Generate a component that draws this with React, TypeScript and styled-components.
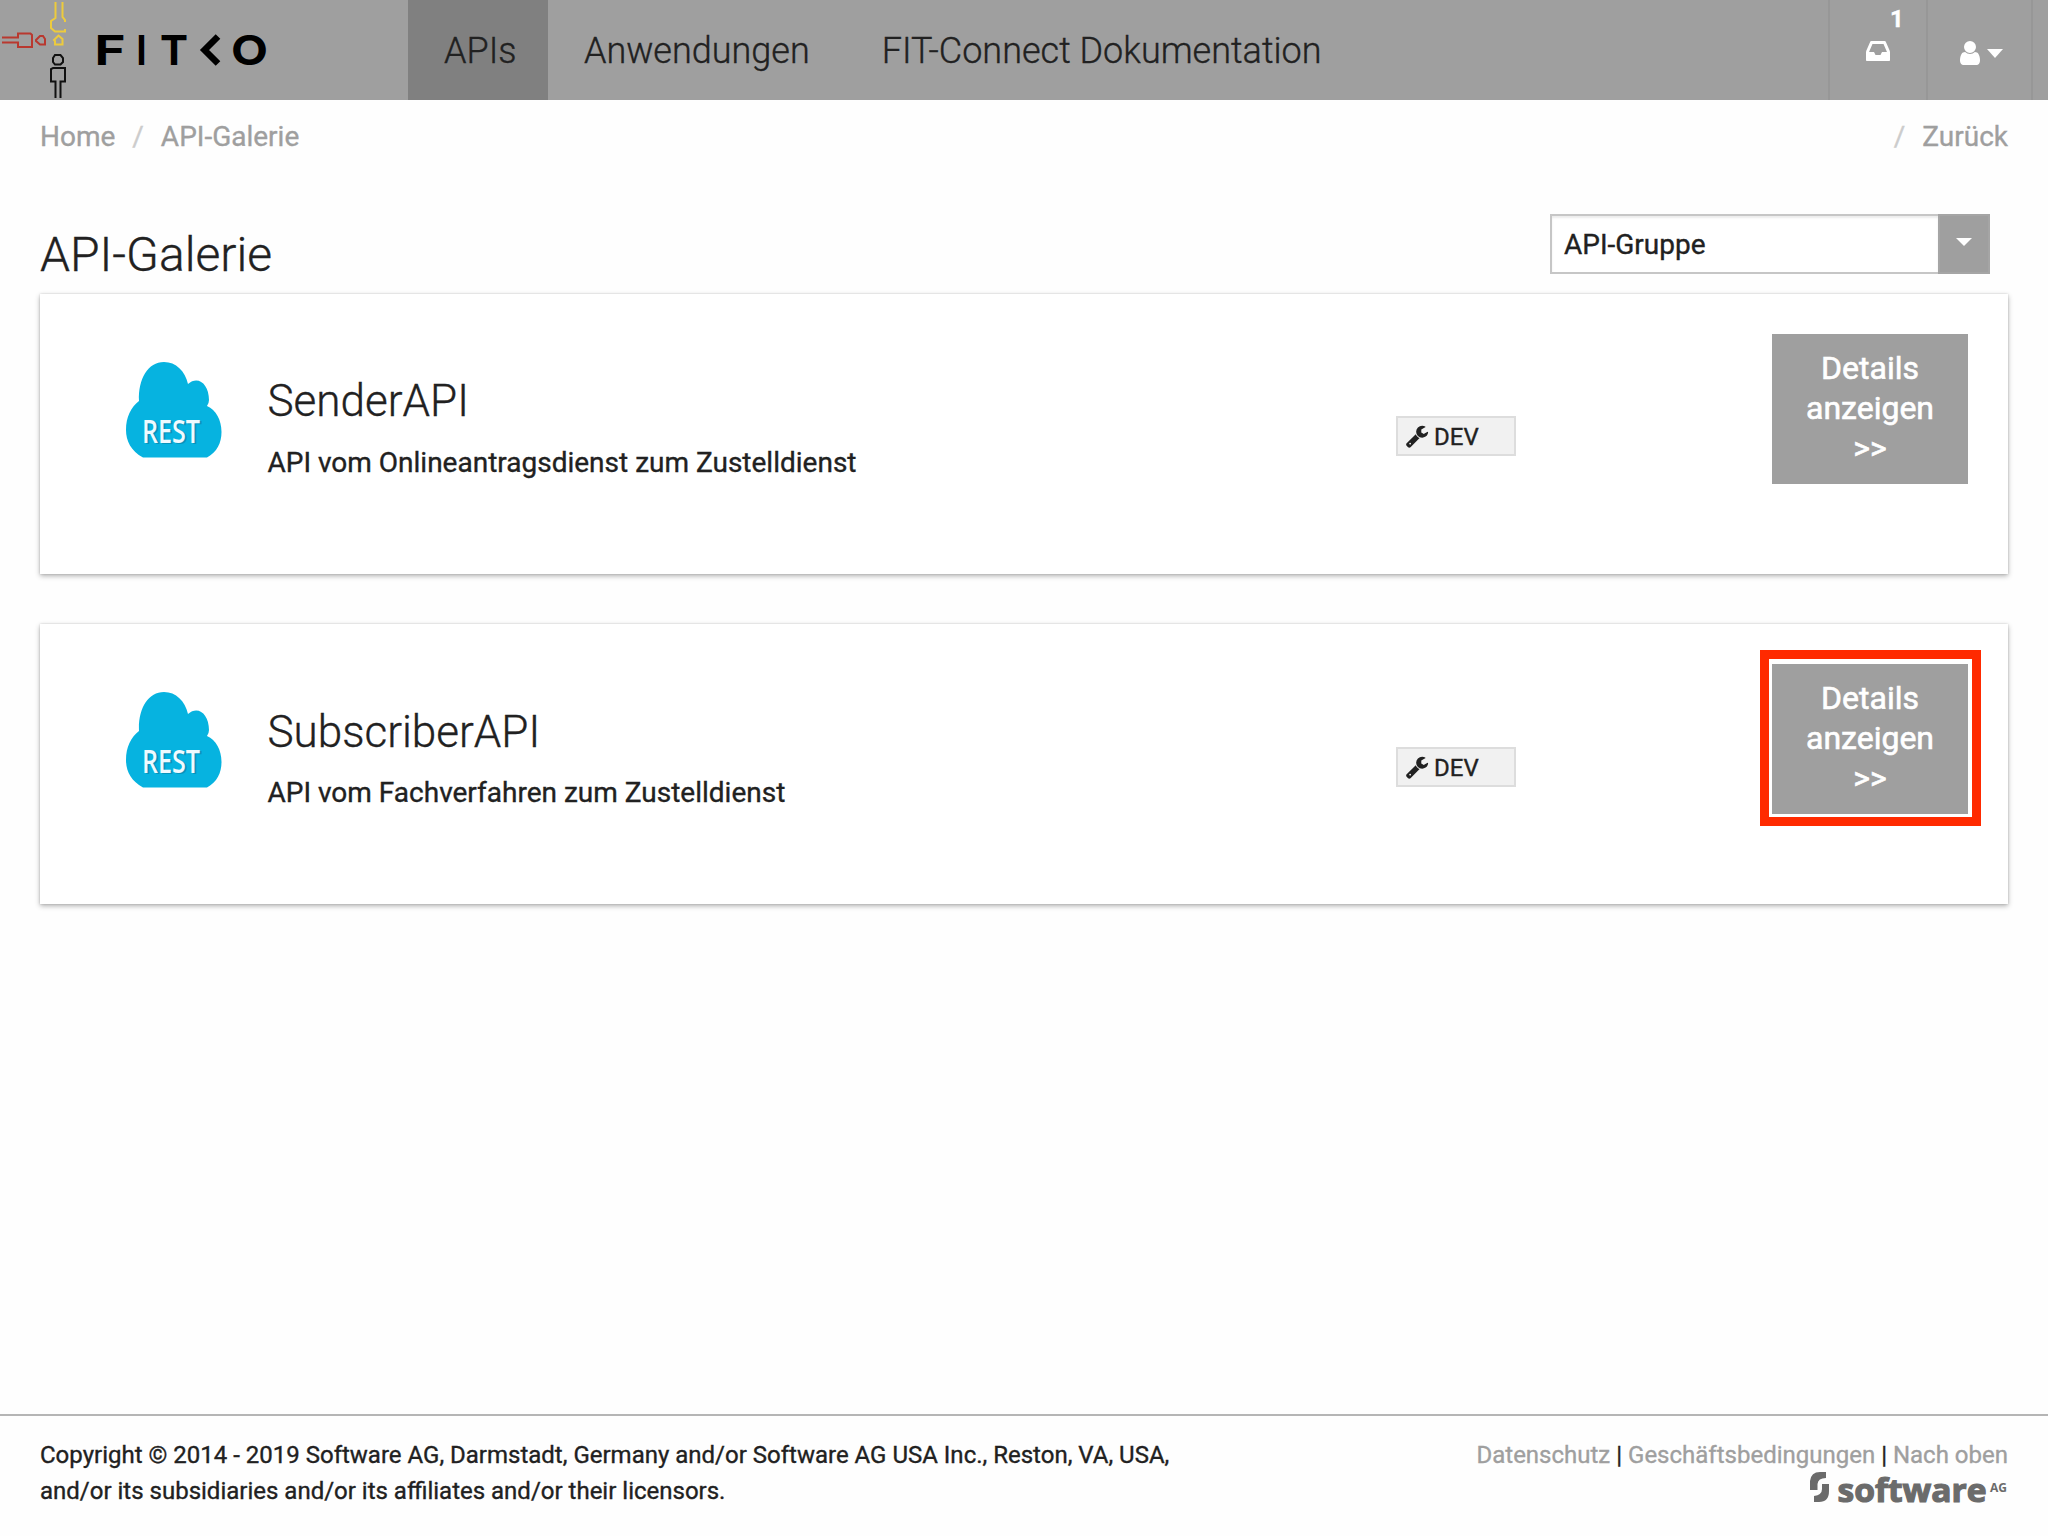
import React from "react";
import styled, { createGlobalStyle } from "styled-components";

const GlobalStyle = createGlobalStyle`
  * { box-sizing: border-box; }
  html, body { margin: 0; padding: 0; }
  body {
    background: #fefefe;
    color: #212121;
    font-family: Roboto, "Liberation Sans", sans-serif;
    font-size: 28px;
    -webkit-text-stroke: 0.35px currentColor;
  }
  svg { display: block; flex: none; overflow: visible; -webkit-text-stroke: 0; }
`;

const Page = styled.div`
  display: flex;
  flex-direction: column;
  width: 2048px;
  height: 1536px;
  overflow: hidden;
`;

const Header = styled.header`
  display: flex;
  flex: none;
  height: 100px;
  background: #9f9f9f;
`;

const Brand = styled.div`
  width: 408px;
`;

const Nav = styled.nav`
  display: flex;
  flex: 1;
`;

const NavItem = styled.a<{ $active?: boolean }>`
  height: 100px;
  padding: 0 ${(p) => (p.$active ? 31.4 : 36)}px 0 36px;
  line-height: 102px;
  font-size: 36px;
  font-weight: 300;
  white-space: nowrap;
  background: ${(p) => (p.$active ? "#808080" : "transparent")};
`;

const Tool = styled.div<{ $width: number; $pad: string }>`
  display: flex;
  align-items: flex-start;
  position: relative;
  width: ${(p) => p.$width}px;
  padding: ${(p) => p.$pad};
  border-left: 2px solid #979797;
`;

const Counter = styled.span`
  position: absolute;
  left: 60px;
  top: 5px;
  color: #fff;
  font-size: 24px;
  line-height: 28px;
  font-weight: 700;
`;

const CaretDown = styled.span<{ $half: number; $height: number }>`
  width: 0;
  height: 0;
  border-left: ${(p) => p.$half}px solid transparent;
  border-right: ${(p) => p.$half}px solid transparent;
  border-top: ${(p) => p.$height}px solid #fff;
`;

const UserCaret = styled.div`
  display: flex;
  padding: 10px 0 0 3px;
`;

const Breadcrumbs = styled.div`
  display: flex;
  flex: none;
  height: 72px;
  padding: 0 40px;
  line-height: 74px;
  color: #9f9f9f;
`;

const Slash = styled.span`
  width: 45.5px;
  text-align: center;
  color: #ccc;
`;

const Spacer = styled.div`
  flex: 1;
`;

const Main = styled.main`
  flex: 1;
  padding: 0 40px;
`;

const TitleRow = styled.div`
  display: flex;
  justify-content: space-between;
  height: 122px;
  padding: 42px 18px 0 0;
`;

const Title = styled.h1`
  margin: 0;
  padding-top: 9px;
  font-size: 48px;
  line-height: 64px;
  font-weight: 300;
`;

const Select = styled.div`
  display: flex;
  width: 440px;
  height: 60px;
`;

const SelectValue = styled.div`
  flex: 1;
  padding-left: 12px;
  line-height: 57px;
  border: 2px solid #c6c6c6;
  border-right: 0;
  background: #fff;
  box-shadow: inset 0 2px 2px rgba(0, 0, 0, 0.08);
`;

const SelectArrow = styled.div`
  display: flex;
  justify-content: center;
  width: 52px;
  padding-top: 22px;
  background: #9f9f9f;
  border: 2px solid #a5a5a5;
`;

const Card = styled.section`
  display: flex;
  align-items: flex-start;
  height: 280px;
  margin-bottom: 50px;
  padding: 40px 40px 0 86px;
  background: #fff;
  box-shadow: 0 2px 5px rgba(0, 0, 0, 0.3), 0 0 2px rgba(0, 0, 0, 0.15);
`;

const RestIcon = styled.svg`
  margin-top: 27px;
`;

const Info = styled.div<{ $shift: number }>`
  width: 1128px;
  margin-left: 45.5px;
  margin-right: 0.5px;
  padding-top: ${(p) => 41 + p.$shift}px;
`;

const ApiName = styled.h2`
  margin: 0;
  font-size: 44px;
  line-height: 52px;
  font-weight: 300;
`;

const ApiDescription = styled.p<{ $shift: number }>`
  margin: ${(p) => 18 - p.$shift}px 0 0;
  line-height: 36px;
`;

const Stage = styled.div<{ $shift: number }>`
  display: flex;
  width: 120px;
  height: 40px;
  margin-top: ${(p) => 82 + p.$shift}px;
  padding: 6px 0 0 7px;
  gap: 5px;
  border: 2px solid #ddd;
  background: #f1f1f1;
  font-size: 24px;
  line-height: 27px;
`;

const DetailsButton = styled.button<{ $marked?: boolean }>`
  display: block;
  position: relative;
  width: 196px;
  height: 150px;
  margin-left: auto;
  padding: 14px 24px 16px;
  border: 0;
  background: #9f9f9f;
  color: #fff;
  font: 400 32px/40px Roboto, "Liberation Sans", sans-serif;
  -webkit-text-stroke: 0.6px #fff;
  text-align: center;
  ${(p) =>
    p.$marked &&
    `&::after {
      content: "";
      position: absolute;
      inset: -14px -13px -12px -12px;
      border: 9px solid #ff2a00;
    }`}
`;

const Footer = styled.footer`
  display: flex;
  flex: none;
  justify-content: space-between;
  height: 122px;
  padding: 21px 40px 0;
  border-top: 2px solid #b5b5b5;
  font-size: 24px;
  line-height: 36px;
`;

const Copyright = styled.div`
  white-space: pre-line;
`;

const Legal = styled.div`
  display: flex;
  flex-direction: column;
  align-items: flex-end;
`;

const LegalLinks = styled.div`
  height: 35px;
`;

const FooterLink = styled.a`
  color: #9f9f9f;
`;

const FitkoLogo = () => (
  <svg width="300" height="100" viewBox="0 0 300 100">
    <g fill="none" strokeWidth="2">
      <path stroke="#b9382f" d="M2 37.5H18V33.5H30.500L32 35V47H18V42.5H2M36 40L40 36H43L45 39V44.5H40L36 41Z" />
      <path stroke="#edcb3d" d="M55.5 2V18L51 21V28L55 31.5H65V29M62.5 2V17L65 20V22M54 40L58.5 35.5L62.5 39V44.5H55V41Z" />
      <path stroke="#111" d="M55.5 98V81.5H51V69L53 68H65V81.5H60.5V98M55 55H60.5L63 58V62L60.5 64.5H55L53 62V58Z" />
      <path stroke="#000" strokeWidth="6.5" d="M218 36.500L204.500 50L218 63.500" />
    </g>
    <g fontFamily="Inter, sans-serif" fontWeight="700" fontSize="41.5" fill="#000">
      <text x="94.500" y="65" textLength="31" lengthAdjust="spacingAndGlyphs">F</text>
      <text x="136.5" y="65" textLength="10" lengthAdjust="spacingAndGlyphs">I</text>
      <text x="160" y="65" textLength="28" lengthAdjust="spacingAndGlyphs">T</text>
      <text x="231" y="65" textLength="37" lengthAdjust="spacingAndGlyphs">O</text>
    </g>
  </svg>
);

const InboxIcon = () => (
  <svg width="28" height="28" viewBox="0 0 1792 1792" fill="#fff">
    <path d="M1151 1024h316q-1-3-2.5-8.5t-2.5-7.5l-212-496h-708l-212 496q-1 3-2.5 8t-2.5 8h316l95 192h320zm513 30v482q0 26-19 45t-45 19h-1408q-26 0-45-19t-19-45v-482q0-62 25-123l238-552q10-25 36.5-42t52.5-17h832q26 0 52.5 17t36.5 42l238 552q25 61 25 123z" />
  </svg>
);

const UserIcon = () => (
  <svg width="28" height="28" viewBox="0 0 1792 1792" fill="#fff">
    <path d="M1536 1399q0 109-62.5 187t-150.5 78h-854q-88 0-150.5-78t-62.5-187q0-85 8.5-160.5t31.5-152 58.5-131 94-89 134.5-34.5q131 128 313 128t313-128q76 0 134.5 34.5t94 89 58.5 131 31.5 152 8.5 160.5zm-256-887q0 159-112.5 271.5t-271.5 112.5-271.5-112.5-112.5-271.5 112.5-271.5 271.5-112.5 271.5 112.5 112.5 271.5z" />
  </svg>
);

const WrenchIcon = () => (
  <svg width="24" height="24" viewBox="0 0 1792 1792" fill="#212121">
    <path d="M448 1472q0-26-19-45t-45-19-45 19-19 45 19 45 45 19 45-19 19-45zm644-420l-682 682q-37 37-90 37-52 0-91-37l-106-108q-38-36-38-90 0-53 38-91l681-681q39 98 114.5 173.5t173.5 114.5zm634-435q0 39-23 106-47 134-164.5 217.5t-258.5 83.5q-185 0-316.5-131.5t-131.5-316.5 131.5-316.5 316.5-131.5q58 0 121.5 16.5t107.5 46.5q16 11 16 28t-16 28l-293 169v224l193 107q5-3 79-48.5t135.5-81 70.5-35.5q15 0 23.5 10t8.5 25z" />
  </svg>
);

const RestCloud = () => (
  <RestIcon width="96" height="97" viewBox="0 0 96 97">
    <path
      fill="#06b3e0"
      d="M17 96.500C5 90 0 80 0 69C0 56 5 46 13 40C12 18 22 1 38 1C50 1 59 10 62 23C72 14 83 23 83 39Q83 42 81 45C90 49 95.500 59 95.500 71C95.500 82 91 91 81 96.500Z"
    />
    <g fontFamily='"Open Sans", sans-serif' fontSize="33" fontWeight="600">
      <text x="18" y="83" fill="#087fa3" opacity="0.6" textLength="58" lengthAdjust="spacingAndGlyphs">REST</text>
      <text x="16" y="81.500" fill="#effaff" textLength="58" lengthAdjust="spacingAndGlyphs">REST</text>
    </g>
  </RestIcon>
);

const SoftwareLogo = () => (
  <svg width="198" height="30" viewBox="0 0 198 30" fill="#6b6b6b">
    <path d="M0 18V9Q1 0 10 0H16V6Q8 6 7.500 12V18ZM12 12H19V19Q19 30 9 30H4V24Q12 23 12 17Z" />
    <g fontFamily='"Open Sans", sans-serif' fontWeight="700">
      <text x="27.500" y="29.500" fontSize="33" stroke="#6b6b6b" strokeWidth="1.2" textLength="149" lengthAdjust="spacingAndGlyphs">software</text>
      <text x="180" y="19.500" fontSize="12" textLength="17" lengthAdjust="spacingAndGlyphs">AG</text>
    </g>
  </svg>
);

interface Api {
  name: string;
  description: string;
  marked?: boolean;
}

const apis: Api[] = [
  { name: "SenderAPI", description: "API vom Onlineantragsdienst zum Zustelldienst" },
  { name: "SubscriberAPI", description: "API vom Fachverfahren zum Zustelldienst", marked: true },
];

const ApiCard = ({ name, description, marked, shift }: Api & { shift: number }) => (
  <Card>
    <RestCloud />
    <Info $shift={shift}>
      <ApiName>{name}</ApiName>
      <ApiDescription $shift={shift}>{description}</ApiDescription>
    </Info>
    <Stage $shift={shift}>
      <WrenchIcon />
      <span>DEV</span>
    </Stage>
    <DetailsButton $marked={marked}>Details anzeigen &gt;&gt;</DetailsButton>
  </Card>
);

export default function App() {
  return (
    <Page>
      <GlobalStyle />
      <Header>
        <Brand>
          <FitkoLogo />
        </Brand>
        <Nav>
          <NavItem $active>APIs</NavItem>
          <NavItem>Anwendungen</NavItem>
          <NavItem>FIT-Connect Dokumentation</NavItem>
        </Nav>
        <Tool $width={98} $pad="36px 0 0 34px">
          <InboxIcon />
          <Counter>1</Counter>
        </Tool>
        <Tool $width={105} $pad="39px 0 0 28px">
          <UserIcon />
          <UserCaret>
            <CaretDown $half={8} $height={9} />
          </UserCaret>
        </Tool>
        <Tool $width={17} $pad="0" />
      </Header>
      <Breadcrumbs>
        <span>Home</span>
        <Slash>/</Slash>
        <span>API-Galerie</span>
        <Spacer />
        <Slash>/</Slash>
        <span>Zurück</span>
      </Breadcrumbs>
      <Main>
        <TitleRow>
          <Title>API-Galerie</Title>
          <Select>
            <SelectValue>API-Gruppe</SelectValue>
            <SelectArrow>
              <CaretDown $half={8} $height={8} />
            </SelectArrow>
          </Select>
        </TitleRow>
        {apis.map((api, index) => (
          <ApiCard key={api.name} shift={index} {...api} />
        ))}
      </Main>
      <Footer>
        <Copyright>
          {"Copyright © 2014 - 2019 Software AG, Darmstadt, Germany and/or Software AG USA Inc., Reston, VA, USA,\nand/or its subsidiaries and/or its affiliates and/or their licensors."}
        </Copyright>
        <Legal>
          <LegalLinks>
            <FooterLink>Datenschutz</FooterLink> | <FooterLink>Geschäftsbedingungen</FooterLink> |{" "}
            <FooterLink>Nach oben</FooterLink>
          </LegalLinks>
          <SoftwareLogo />
        </Legal>
      </Footer>
    </Page>
  );
}
